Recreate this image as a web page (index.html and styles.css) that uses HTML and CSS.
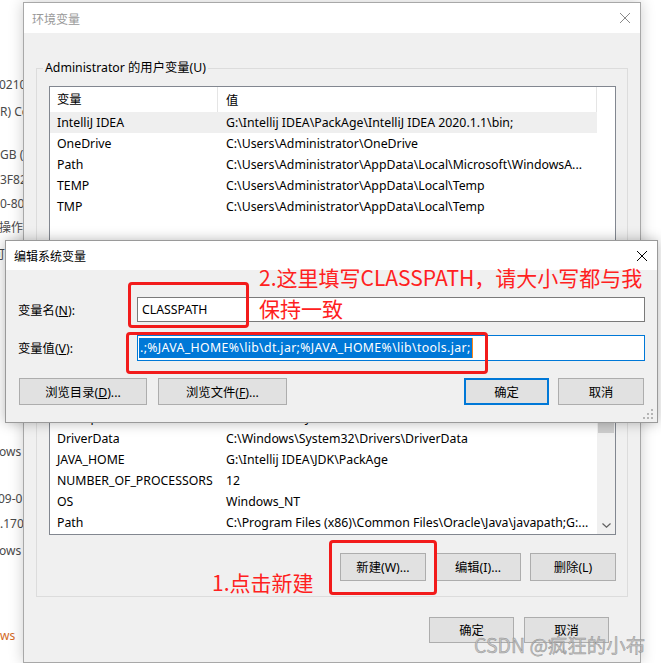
FILE: index.html
```html
<!DOCTYPE html>
<html lang="zh-CN">
<head>
<meta charset="utf-8">
<title>环境变量</title>
<link rel="stylesheet" href="styles.css">
</head>
<body>
<div class="desk">
  <div class="bgtext">
    <p class="bl b1">0210</p>
    <p class="bl b2">R) Core</p>
    <p class="bl b3">GB (7.</p>
    <p class="bl b4">3F82</p>
    <p class="bl b5">0-80</p>
    <p class="bl b6">操作</p>
    <p class="bl b7">可</p>
    <p class="bl b8">ows</p>
    <p class="bl b9">09-0</p>
    <p class="bl b10">.170</p>
    <p class="bl b11">ows</p>
    <p class="bl b12 link">ws</p>
  </div>

  <section class="win main">
    <header class="tbar">
      <span class="ttl dim">环境变量</span>
      <svg class="xbtn dimx" viewBox="0 0 10 10" width="10" height="10"><path d="M0 0L10 10M10 0L0 10"/></svg>
    </header>
    <div class="mbody">
      <fieldset class="grp g1">
        <legend>Administrator 的用户变量(U)</legend>
        <div class="list l1">
          <div class="cols">
            <div class="hdr"><span class="c1">变量</span><span class="c2">值</span></div>
            <div class="row sel"><span class="c1">IntelliJ IDEA</span><span class="c2">G:\Intellij IDEA\PackAge\IntelliJ IDEA 2020.1.1\bin;</span></div>
            <div class="row"><span class="c1">OneDrive</span><span class="c2">C:\Users\Administrator\OneDrive</span></div>
            <div class="row"><span class="c1">Path</span><span class="c2">C:\Users\Administrator\AppData\Local\Microsoft\WindowsA...</span></div>
            <div class="row"><span class="c1">TEMP</span><span class="c2">C:\Users\Administrator\AppData\Local\Temp</span></div>
            <div class="row"><span class="c1">TMP</span><span class="c2">C:\Users\Administrator\AppData\Local\Temp</span></div>
          </div>
        </div>
        <div class="gbtns">
          <button class="btn w86"><span>新建(N)...</span></button>
          <button class="btn w86"><span>编辑(E)...</span></button>
          <button class="btn w86"><span>删除(D)</span></button>
        </div>
      </fieldset>

      <fieldset class="grp g2">
        <legend>系统变量(S)</legend>
        <div class="list l2">
          <div class="cols">
            <div class="hdr"><span class="c1">变量</span><span class="c2">值</span></div>
            <div class="row"><span class="c1">asl.log</span><span class="c2">Destination=file</span></div>
            <div class="row"><span class="c1">ComSpec</span><span class="c2">C:\Windows\system32\cmd.exe</span></div>
            <div class="row"><span class="c1">DriverData</span><span class="c2">C:\Windows\System32\Drivers\DriverData</span></div>
            <div class="row"><span class="c1">JAVA_HOME</span><span class="c2">G:\Intellij IDEA\JDK\PackAge</span></div>
            <div class="row"><span class="c1">NUMBER_OF_PROCESSORS</span><span class="c2">12</span></div>
            <div class="row"><span class="c1">OS</span><span class="c2">Windows_NT</span></div>
            <div class="row"><span class="c1">Path</span><span class="c2">C:\Program Files (x86)\Common Files\Oracle\Java\javapath;G:...</span></div>
          </div>
          <div class="vscroll">
            <div class="arr"><svg viewBox="0 0 9 5" width="9" height="5"><path d="M0.5 4.5L4.5 0.8L8.5 4.5"/></svg></div>
            <div class="track"><div class="thumb"></div></div>
            <div class="arr"><svg viewBox="0 0 9 5" width="9" height="5"><path d="M0.5 0.5L4.5 4.2L8.5 0.5"/></svg></div>
          </div>
        </div>
        <div class="gbtns">
          <button class="btn w86"><span>新建(W)...</span></button>
          <button class="btn w86"><span>编辑(I)...</span></button>
          <button class="btn w86"><span>删除(L)</span></button>
        </div>
      </fieldset>

      <div class="foot">
        <button class="btn w85 h26"><span>确定</span></button>
        <button class="btn w85 h26"><span>取消</span></button>
      </div>
    </div>
  </section>

  <section class="win edit">
    <header class="tbar">
      <span class="ttl">编辑系统变量</span>
      <svg class="xbtn" viewBox="0 0 10 10" width="10" height="10"><path d="M0 0L10 10M10 0L0 10"/></svg>
    </header>
    <div class="ebody">
      <div class="frow">
        <label class="lbl">变量名(<u>N</u>):</label>
        <div class="inp"><span class="val">CLASSPATH</span></div>
      </div>
      <div class="frow">
        <label class="lbl">变量值(<u>V</u>):</label>
        <div class="inp focus"><span class="seltext">.;%JAVA_HOME%\lib\dt.jar;%JAVA_HOME%\lib\tools.jar;</span><span class="caret"></span></div>
      </div>
      <div class="ebtns">
        <button class="btn w128"><span>浏览目录(<u>D</u>)...</span></button>
        <button class="btn w129"><span>浏览文件(<u>F</u>)...</span></button>
        <span class="spacer"></span>
        <button class="btn w85 def"><span>确定</span></button>
        <button class="btn w86"><span>取消</span></button>
      </div>
    </div>
    <svg class="grip" viewBox="0 0 10 10" width="10" height="10">
      <rect x="8" y="0" width="2" height="2"/><rect x="4" y="4" width="2" height="2"/><rect x="8" y="4" width="2" height="2"/>
      <rect x="0" y="8" width="2" height="2"/><rect x="4" y="8" width="2" height="2"/><rect x="8" y="8" width="2" height="2"/>
    </svg>
  </section>

  <div class="mark m1"></div>
  <div class="mark m2"></div>
  <div class="mark m3"></div>
  <p class="note n1">2.这里填写CLASSPATH，请大小写都与我<br>保持一致</p>
  <p class="note n2">1.点击新建</p>
  <p class="wm">CSDN @疯狂的小布</p>
</div>
</body>
</html>
```

FILE: styles.css
```css
* { box-sizing: border-box; }
html, body { margin: 0; padding: 0; }
body {
  width: 661px;
  height: 663px;
  overflow: hidden;
  background: #fff;
  font-family: "Noto Sans", "Noto Sans CJK SC", sans-serif;
  font-size: 12.3px;
  color: #000;
}
.desk { position: relative; width: 661px; height: 663px; overflow: hidden; }

/* background window text */
.bl {
  position: absolute;
  margin: 0;
  font-family: "Noto Sans", "Noto Sans CJK SC", sans-serif;
  font-size: 12px;
  line-height: 16px;
  color: #4a4a4a;
  white-space: nowrap;
}
.b1 { top: 77px; left: -1px; }
.b2 { top: 104px; left: 0px; }
.b3 { top: 147px; left: 0px; }
.b4 { top: 172px; left: 0px; }
.b5 { top: 196px; left: 0px; }
.b6 { top: 220px; left: -1px; }
.b7 { top: 247px; left: -7px; }
.b8 { top: 444px; left: -1px; }
.b9 { top: 491px; left: -2px; }
.b10 { top: 516px; left: 0px; }
.b11 { top: 543px; left: -1px; }
.b12 { top: 628px; left: 0px; }
.link { color: #d2691e; }

/* windows */
.win {
  position: absolute;
  display: flex;
  flex-direction: column;
  background: #f0f0f0;
  border: 1px solid #a8a8a8;
}
.main {
  left: 23px;
  top: 2px;
  width: 618px;
  height: 661px;
  box-shadow: 0 0 14px rgba(0, 0, 0, 0.2);
}
.tbar {
  display: flex;
  align-items: center;
  justify-content: space-between;
  background: #fff;
  flex: none;
}
.main .tbar { height: 30px; padding: 0 10px 0 8px; }
.ttl { font-family: "Noto Sans CJK SC", sans-serif; font-size: 12px; }
.dim { color: #999; }
.xbtn path { stroke: #000; stroke-width: 1; fill: none; }
.dimx path { stroke: #8a8a8a; }

.mbody { flex: 1; padding: 0 12px; display: flex; flex-direction: column; }

.grp {
  margin: 0;
  min-width: 0;
  border: 1px solid #dcdcdc;
  padding: 10px 11px 10px 12px;
}
.grp legend {
  padding: 0 2px;
  margin-left: -6px;
  line-height: 16px;
  font-size: 12.3px;
}
.g1 { margin-top: 27px; }
.g2 { margin-top: 16px; padding-bottom: 15px; }

.list {
  display: flex;
  background: #fff;
  border: 1px solid #828790;
  overflow: hidden;
}
.l1 { height: 184px; }
.l2 { height: 175px; }
.cols { width: 547px; flex: none; }
.hdr, .row {
  display: grid;
  grid-template-columns: 168px 379px;
  align-items: center;
  white-space: nowrap;
}
.hdr { height: 25px; border-right: 1px solid #e5e5e5; }
.hdr .c1 { border-right: 1px solid #e5e5e5; height: 25px; line-height: 25px; }
.row { height: 21px; }
.c1 { padding-left: 7px; overflow: hidden; }
.c2 { padding-left: 8px; overflow: hidden; }
.row.sel { background: #efefef; }

.vscroll {
  flex: 1;
  display: flex;
  flex-direction: column;
  background: #f0f0f0;
}
.arr { height: 17px; display: flex; align-items: center; justify-content: center; flex: none; }
.arr path { stroke: #606060; stroke-width: 1.2; fill: none; }
.track { flex: 1; padding: 22px 1px 0 1px; }
.thumb { height: 33px; background: #cdcdcd; }

.gbtns { display: flex; justify-content: flex-end; gap: 9px; margin-top: 9px; }
.g2 .gbtns { margin-top: 18px; }

.btn {
  height: 28px;
  padding: 0;
  background: #e1e1e1;
  border: 1px solid #adadad;
  font-family: "Noto Sans", "Noto Sans CJK SC", sans-serif;
  font-size: 12.3px;
  color: #000;
  display: flex;
  align-items: center;
  justify-content: center;
  white-space: nowrap;
}
.btn.def { border: 2px solid #0078d7; }
.w85 { width: 85px; }
.w86 { width: 86px; }
.w128 { width: 128px; }
.w129 { width: 129px; }
.h26 { height: 26px; }

.foot { display: flex; justify-content: flex-end; gap: 10px; margin-top: 20px; padding-right: 19px; }

/* edit dialog */
.edit {
  left: 5px;
  top: 240px;
  width: 653px;
  height: 183px;
  border-color: #9a9a9a;
  box-shadow: 0 0 12px rgba(0, 0, 0, 0.28);
}
.edit .tbar { height: 29px; padding: 0 10px 0 8px; }
.ebody { flex: 1; display: flex; flex-direction: column; padding: 27px 12px 0 12px; }
.frow { display: grid; grid-template-columns: 119px 1fr; align-items: center; }
.frow + .frow { margin-top: 13px; }
.inp {
  height: 25px;
  background: #fff;
  border: 1px solid #7a7a7a;
  display: flex;
  align-items: center;
  padding-left: 4px;
  white-space: nowrap;
}
.inp.focus { height: 26px; border-color: #0078d7; padding-left: 1px; }
.seltext {
  background: #0078d7;
  color: #fff;
  height: 20px;
  line-height: 20px;
  padding: 0 1px;
  letter-spacing: 0.35px;
}
.caret { width: 1px; height: 20px; background: #ff8719; }
.ebtns { display: flex; gap: 11px; margin: 17px 1px 0 1px; }
.ebtns .btn { height: 27px; }
.ebtns .def { margin-right: -2px; }
.spacer { flex: 1; }
.grip { position: absolute; right: 4px; bottom: 3px; }
.grip rect { fill: #b5b5b5; }

/* annotations */
.mark {
  position: absolute;
  border: 3px solid #f21b1b;
  border-radius: 4px;
}
.m1 { left: 128px; top: 282px; width: 121px; height: 46px; }
.m2 { left: 126px; top: 332px; width: 362px; height: 42px; }
.m3 { left: 329px; top: 540px; width: 108px; height: 55px; }
.note {
  position: absolute;
  margin: 0;
  color: #ff2020;
  font-family: "Noto Sans CJK SC", sans-serif;
  font-size: 21px;
  line-height: 31px;
  white-space: nowrap;
}
.n1 { left: 259px; top: 262px; }
.n2 { left: 212px; top: 567px; }
.wm {
  position: absolute;
  margin: 0;
  left: 474px;
  top: 632px;
  font-family: "Noto Sans CJK SC", sans-serif;
  font-size: 19.5px;
  line-height: 26px;
  color: rgba(190, 190, 190, 0.9);
  -webkit-text-stroke: 0.5px rgba(120, 120, 120, 0.7);
  white-space: nowrap;
}
```
